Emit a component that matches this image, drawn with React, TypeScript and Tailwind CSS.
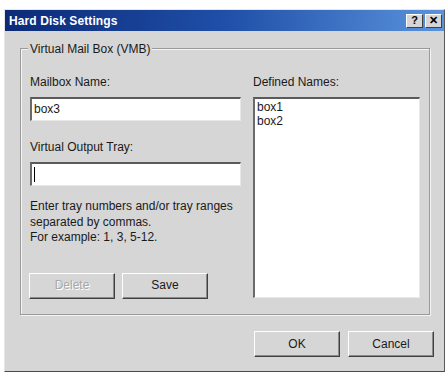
import React from 'react';

const font = "font-['Liberation_Sans',Arial,sans-serif]";

const sunken =
  'bg-white border-t-2 border-l-2 border-b border-r border-t-[#5a5a5a] border-l-[#6a6a6a] border-b-[#e8e8e8] border-r-[#e8e8e8]';

const Button: React.FC<{ label: string; disabled?: boolean; isDefault?: boolean }> = ({
  label,
  disabled,
  isDefault,
}) => (
  <button
    className={`w-[86px] h-[26px] bg-[#d6d6d6] text-[12px] border border-t-white border-l-white ${
      isDefault ? 'border-l-[#404040] border-t-[#9a9a9a]' : ''
    } border-b-[#404040] border-r-[#404040] shadow-[inset_-1px_-1px_0_#8a8a8a] ${
      disabled ? 'text-[#a8a8a8] [text-shadow:1px_1px_0_#fff]' : 'text-[#1a1a1a]'
    }`}
  >
    {label}
  </button>
);

const TitleButton: React.FC<{ glyph: string }> = ({ glyph }) => (
  <div className="w-[17px] h-[14px] bg-[#d6d6d6] border border-t-white border-l-white border-b-[#404040] border-r-[#404040] flex items-center justify-center text-[11px] font-bold text-black leading-none">
    {glyph}
  </div>
);

const App: React.FC = () => {
  return (
    <div className={`w-[448px] h-[376px] bg-white pt-[9px] pl-[4px] ${font}`}>
      <div className="w-[441px] h-[363px] bg-[#d6d6d6] border border-t-[#e6e6e6] border-l-[#e6e6e6] border-b-[#4a4a4a] border-r-[#5a5a5a] flex flex-col">
        {/* title bar */}
        <div className="h-[21px] bg-gradient-to-r from-[#0c2a78] via-[#1f4fa8] to-[#5b93dc] flex items-center justify-between pl-[4px] pr-[2px]">
          <span className="text-white text-[12px] font-bold tracking-[0.1px]">Hard Disk Settings</span>
          <div className="flex gap-[2px]">
            <TitleButton glyph="?" />
            <TitleButton glyph="✕" />
          </div>
        </div>

        {/* group box */}
        <div className="relative ml-[15px] mt-[17px] w-[410px] h-[267px] border border-[#9a9a9a] shadow-[inset_1px_1px_0_#f4f4f4,1px_1px_0_#f4f4f4]">
          <span className="absolute -top-[9px] left-[7px] bg-[#d6d6d6] px-[2px] text-[12px] text-[#1a1a1a]">
            Virtual Mail Box (VMB)
          </span>
          <div className="flex gap-[12px] pl-[9px] pt-[26px] text-[12px] text-[#1a1a1a] leading-[15px]">
            <div className="w-[211px] flex flex-col">
              <span>Mailbox Name:</span>
              <div className={`mt-[7px] h-[24px] ${sunken} flex items-center pl-[2px]`}>box3</div>
              <span className="mt-[19px]">Virtual Output Tray:</span>
              <div className={`mt-[7px] h-[24px] ${sunken} flex items-center pl-[2px]`}>
                <div className="w-[1px] h-[15px] bg-black" />
              </div>
              <p className="mt-[13px] leading-[15.5px]">
                Enter tray numbers and/or tray ranges
                <br />
                separated by commas.
                <br />
                For example: 1, 3, 5-12.
              </p>
              <div className="mt-[27px] flex gap-[7px] -ml-[1px]">
                <Button label="Delete" disabled />
                <Button label="Save" />
              </div>
            </div>
            <div className="w-[167px] flex flex-col">
              <span>Defined Names:</span>
              <div className={`mt-[7px] h-[201px] ${sunken} pl-[2px] pt-[1px] leading-[14px]`}>
                <div>box1</div>
                <div>box2</div>
              </div>
            </div>
          </div>
        </div>

        {/* dialog buttons */}
        <div className="mt-[16px] flex justify-end gap-[8px] pr-[10px]">
          <Button label="OK" isDefault />
          <Button label="Cancel" />
        </div>
      </div>
    </div>
  );
};

export default App;
